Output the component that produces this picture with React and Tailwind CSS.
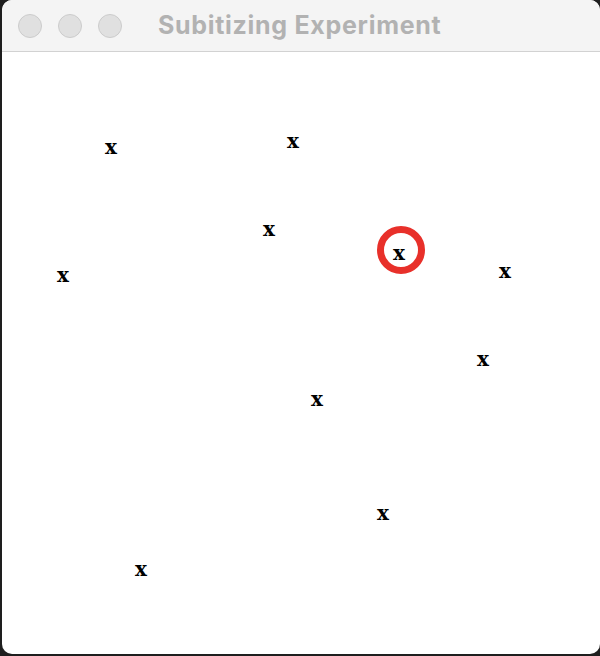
const marks = [
  { x: 111, y: 148 },
  { x: 293, y: 142 },
  { x: 269, y: 230 },
  { x: 399, y: 254 },
  { x: 63, y: 276 },
  { x: 505, y: 272 },
  { x: 483, y: 360 },
  { x: 317, y: 400 },
  { x: 383, y: 514 },
  { x: 141, y: 570 },
];

const TOP = 53;

export default function App() {
  return (
    <div className="w-[600px] h-[656px] bg-[#1e1e1e] overflow-hidden">
      <div className="ml-[2px] w-[598px] h-[654px] bg-white rounded-[10px] overflow-hidden flex flex-col">
        <div className="h-[52px] shrink-0 bg-[#f4f4f4] border-b border-[#d2d2d2] flex items-center pl-[16px]">
          <div className="flex gap-[16px]">
            <span className="w-[24px] h-[24px] rounded-full bg-[#e0e0e0] border border-[#cccccc]" />
            <span className="w-[24px] h-[24px] rounded-full bg-[#e0e0e0] border border-[#cccccc]" />
            <span className="w-[24px] h-[24px] rounded-full bg-[#e0e0e0] border border-[#cccccc]" />
          </div>
          <h1 className="ml-[36px] text-[25px] font-bold tracking-[0.7px] text-[#b2b2b2] font-[family-name:Inter,'Liberation_Sans',sans-serif]">
            Subitizing Experiment
          </h1>
        </div>
        <div className="relative flex-1">
          <div className="absolute left-[375px] top-[174px] w-[48px] h-[48px] rounded-full border-[7px] border-[#e8302a]" />
          {marks.map((m, i) => (
            <span
              key={i}
              className="absolute -translate-x-1/2 -translate-y-1/2 leading-none text-[20px] font-bold text-black font-[family-name:'DejaVu_Serif',serif]"
              style={{ left: m.x - 2, top: m.y - TOP }}
            >
              x
            </span>
          ))}
        </div>
      </div>
    </div>
  );
}
